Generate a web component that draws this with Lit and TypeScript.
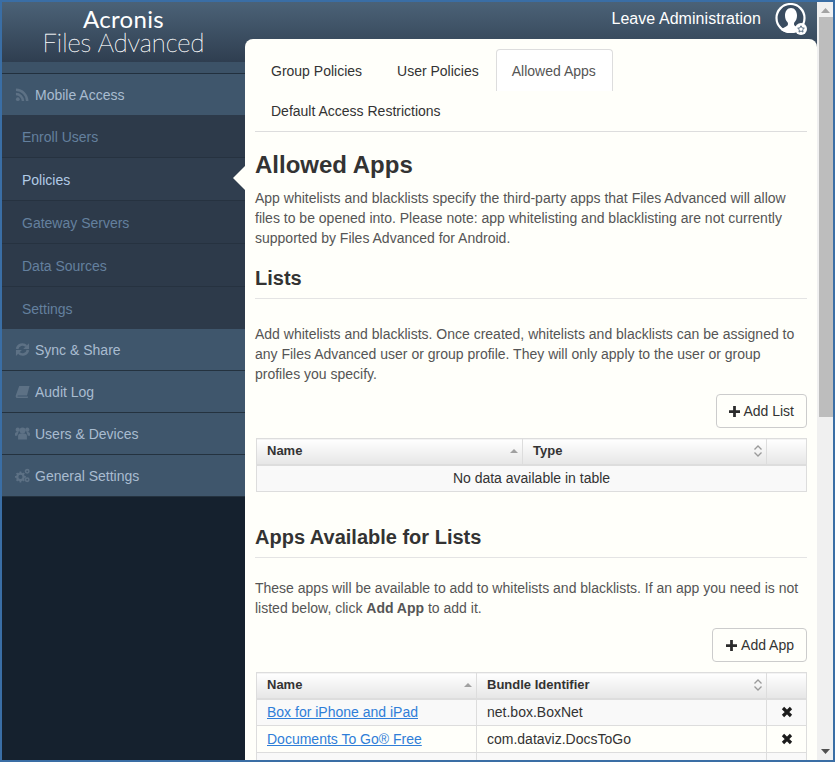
import { LitElement, css, html, svg } from "lit";
import { customElement } from "lit/decorators.js";

const icons: Record<string, unknown> = {
  rss: svg`<circle cx="3" cy="13" r="2"/><path d="M1 7.500a7.500 7.500 0 0 1 7.500 7.500M1 3a12 12 0 0 1 12 12" fill="none" stroke="currentColor" stroke-width="2.600"/>`,
  sync: svg`<path d="M2.200 7.500A5.800 5.800 0 0 1 12 4.400" fill="none" stroke="currentColor" stroke-width="2.800"/><path d="M15 1.200v6.300H8.700z"/><path d="M13.800 8.500A5.800 5.800 0 0 1 4 11.600" fill="none" stroke="currentColor" stroke-width="2.800"/><path d="M1 14.800V8.500h6.300z"/>`,
  book: svg`<path d="M4.500 2h11l-2.700 10.300H3.200c-.7 0-.9.900-.2 1h11l-.4 1.700H2.500C1 15 .4 13.500.8 12.200z"/>`,
  users: svg`<circle cx="8" cy="4.800" r="3.200"/><circle cx="2.900" cy="4" r="2.300"/><circle cx="13.100" cy="4" r="2.300"/><path d="M3.300 14.500V10.500c0-2 1.700-2.800 4.700-2.800s4.700.8 4.700 2.800v4z"/><path d="M0 10.500V8.300c0-1.300 1-1.800 3.800-1.800L2.300 10.500zM16 10.500V8.300c0-1.300-1-1.800-3.800-1.800l1.500 4z"/>`,
  cogs: svg`<circle cx="5.800" cy="9.500" r="3.400" fill="none" stroke="currentColor" stroke-width="2.400"/><path d="M5.800 3.600v2.500M5.800 12.900v2.500M0 9.500h2.500M9.100 9.500h2.500M1.700 5.400l1.700 1.700M8.200 11.900l1.700 1.700M9.900 5.400L8.200 7.100M3.400 11.900l-1.700 1.700" stroke="currentColor" stroke-width="1.900"/><circle cx="13" cy="3.500" r="1.800" fill="none" stroke="currentColor" stroke-width="1.700"/><circle cx="13" cy="12.500" r="1.800" fill="none" stroke="currentColor" stroke-width="1.700"/>`,
};

function navIcon(name: string) {
  return html`<svg class="nav-icon" viewBox="0 0 16 16" fill="currentColor">${icons[name]}</svg>`;
}

const plusIcon = html`<svg class="plus" viewBox="0 0 12 12"><path d="M4.500 0h3v4.500H12v3H7.500V12h-3V7.500H0v-3h4.500z" fill="#2b2b2b"/></svg>`;
const sortAsc = html`<svg class="sort" viewBox="0 0 10 14"><path d="M1 9l4-4 4 4z" fill="#a0a0a0"/></svg>`;
const sortBoth = html`<svg class="sort" viewBox="0 0 10 14"><path d="M1.500 5.500L5 2l3.500 3.500M1.500 8.500L5 12l3.500-3.500" fill="none" stroke="#9a9a9a" stroke-width="1.300"/></svg>`;
const removeIcon = html`<svg class="remove" viewBox="0 0 12 12"><path d="M2 2l8 8M10 2l-8 8" stroke="#1c1c1c" stroke-width="3.200"/></svg>`;

@customElement("app-root")
export class AppRoot extends LitElement {
  static styles = css`
    :host {
      display: block;
      width: 835px;
      height: 762px;
      box-sizing: border-box;
      border: 2px solid #3a6ea5;
      overflow: hidden;
      font-family: "Liberation Sans", Arial, sans-serif;
      font-size: 14px;
      line-height: 20px;
      color: #333;
    }
    .window {
      display: flex;
      height: 100%;
    }
    .app {
      flex: 1;
      min-width: 0;
      display: grid;
      grid-template-columns: 243px 1fr;
      background: linear-gradient(#4b6277, #2f3e50) 0 0 / 100% 60px no-repeat #15212e;
    }
    .logo {
      height: 60px;
      box-sizing: border-box;
      padding-top: 5px;
      display: flex;
      flex-direction: column;
      align-items: center;
      color: #fff;
      font-family: Lato, "Liberation Sans", sans-serif;
    }
    .logo .brand {
      font-size: 24px;
      font-weight: 400;
      line-height: 24px;
      letter-spacing: 0.3px;
    }
    .logo .product {
      font-size: 25.500px;
      font-weight: 100;
      line-height: 22px;
      -webkit-text-stroke: 0.3px #fff;
    }
    .gap {
      height: 11px;
      background: #3c5267;
      border-bottom: 1px solid #22303e;
    }
    .section {
      display: flex;
      align-items: center;
      height: 41px;
      background: #3f566c;
      color: #a9bcd0;
      border-bottom: 1px solid #24323f;
      padding-left: 13px;
    }
    .section.open {
      border-bottom: 0;
    }
    .nav-icon {
      width: 15px;
      height: 15px;
      margin-right: 5px;
      color: #5d7185;
      flex: none;
    }
    .sub {
      background: #2d3a4a;
    }
    .sub a {
      display: flex;
      align-items: center;
      height: 43px;
      box-sizing: border-box;
      padding: 2px 0 0 20px;
      color: #64809e;
      border-bottom: 1px solid #263240;
    }
    .sub a:last-child {
      height: 42px;
      border-bottom: 0;
    }
    .sub a.active {
      color: #b2cbe6;
      background: #303e4f;
    }
    .right {
      display: flex;
      flex-direction: column;
      min-width: 0;
      min-height: 0;
    }
    .top {
      height: 37px;
      box-sizing: border-box;
      flex: none;
      display: flex;
      align-items: center;
      justify-content: flex-end;
      color: #fff;
      font-size: 16px;
      letter-spacing: 0.05px;
      padding: 0 10px 4px 0;
    }
    .avatar {
      width: 32px;
      height: 32px;
      margin-left: 14px;
    }
    .panel {
      flex: 1;
      min-height: 0;
      overflow: hidden;
      background: #fffffa;
      border-radius: 8px 8px 0 0;
      padding: 10px 10px 0;
      color: #555;
    }
    .pointer {
      position: absolute;
      left: -12px;
      top: 127px;
      width: 0;
      height: 0;
      border: 12px solid transparent;
      border-left: 0;
      border-right-color: #fffffa;
    }
    .panel-wrap {
      position: relative;
      flex: 1;
      min-height: 0;
      display: flex;
      flex-direction: column;
    }
    .tabs {
      display: flex;
      flex-wrap: wrap;
      border-bottom: 1px solid #ddd;
      color: #333;
    }
    .tabs a {
      height: 40px;
      box-sizing: border-box;
      padding: 9px 15px 0;
      margin-right: 3px;
      border: 1px solid transparent;
      border-bottom: 0;
      border-radius: 4px 4px 0 0;
    }
    .tabs a:nth-child(-n + 3) {
      height: 42px;
      padding-top: 11px;
    }
    .tabs a:nth-child(2) {
      margin-right: 1px;
    }
    .tabs a.active {
      width: 117px;
      border-color: #ddd;
      background: #fff;
      color: #555;
    }
    h1 {
      margin: 20px 0 10px;
      font-size: 24px;
      line-height: 26px;
      color: #333;
    }
    h2 {
      margin: 19px 0 0;
      padding-bottom: 9px;
      border-bottom: 1px solid #e4e4e4;
      font-size: 20px;
      line-height: 22px;
      color: #333;
    }
    p {
      margin: 0;
    }
    .note {
      margin-top: 25px;
    }
    .actions {
      display: flex;
      justify-content: flex-end;
      margin-top: 10px;
      margin-bottom: 10px;
    }
    button {
      display: flex;
      align-items: center;
      height: 34px;
      padding: 0 12px;
      border: 1px solid #ccc;
      border-radius: 4px;
      background: #fffffa;
      color: #333;
      font: inherit;
    }
    .plus {
      width: 11px;
      height: 11px;
      margin-right: 3px;
    }
    .apps button {
      padding-left: 13px;
    }
    .apps .plus {
      margin-right: 4px;
    }
    table {
      width: 551px;
      margin-left: 1px;
      border-collapse: collapse;
      table-layout: fixed;
      color: #333;
    }
    th, td {
      border: 1px solid #ddd;
      padding: 0 10px;
      text-align: left;
      height: 27px;
      box-sizing: border-box;
    }
    th {
      height: 26px;
      background: linear-gradient(#fff, #e6e6e6);
      border-bottom-width: 2px;
      font-size: 13px;
      font-weight: bold;
    }
    th span {
      display: flex;
      justify-content: space-between;
      align-items: center;
    }
    .sort {
      width: 10px;
      height: 14px;
      margin-right: -7px;
    }
    tbody tr:nth-child(odd) td {
      background: #f9f9f9;
    }
    td.empty {
      text-align: center;
    }
    td a {
      color: #2f7ed8;
      text-decoration: underline;
    }
    td.x {
      text-align: center;
      padding: 0;
    }
    .remove {
      width: 12px;
      height: 12px;
      vertical-align: -1px;
    }
    .apps h2 {
      margin-top: 34px;
    }
    .apps .note {
      margin-top: 20px;
    }
    .scrollbar {
      width: 16px;
      flex: none;
      background: #f0f0f0;
      display: flex;
      flex-direction: column;
      justify-content: space-between;
      position: relative;
    }
    .arrow {
      height: 17px;
      display: flex;
      align-items: center;
      justify-content: center;
    }
    .arrow svg {
      width: 9px;
      height: 5px;
    }
    .thumb {
      position: absolute;
      left: 2px;
      right: 0;
      top: 15px;
      height: 400px;
      background: #bdbdbd;
    }
  `;

  render() {
    return html`
      <div class="window">
        <div class="app">
          <aside>
            <div class="logo">
              <div class="brand">Acronis</div>
              <div class="product">Files Advanced</div>
            </div>
            <div class="gap"></div>
            <div class="section open">${navIcon("rss")}Mobile Access</div>
            <div class="sub">
              <a>Enroll Users</a>
              <a class="active">Policies</a>
              <a>Gateway Servers</a>
              <a>Data Sources</a>
              <a>Settings</a>
            </div>
            <div class="section">${navIcon("sync")}Sync &amp; Share</div>
            <div class="section">${navIcon("book")}Audit Log</div>
            <div class="section">${navIcon("users")}Users &amp; Devices</div>
            <div class="section">${navIcon("cogs")}General Settings</div>
          </aside>
          <div class="right">
            <div class="top">
              Leave Administration
              <svg class="avatar" viewBox="0 0 32 32">
                <circle cx="15.500" cy="15" r="14" fill="#3a4c60" stroke="#fff" stroke-width="2.200"/>
                <path d="M6 27c1.500-2.500 5-3 6.500-4.500.6-1 .6-2.200.2-3-1.800-1.800-2.700-4-2.700-7C10 8.500 12.300 5 16 5s6 3.500 6 7.500c0 3-.9 5.200-2.700 7-.4.800-.4 2 .2 3 1.500 1.500 5 2 6.500 4.500-2.500 2-6 3-10 3s-7.500-1-10-3z" fill="#fff"/>
                <circle cx="26" cy="26" r="6" fill="#fff"/>
                <path d="M26 22.800l1 2.100 2.300.3-1.700 1.600.4 2.300-2-1.100-2 1.100.4-2.300-1.700-1.600 2.300-.3z" fill="none" stroke="#4a6178" stroke-width=".9"/>
              </svg>
            </div>
            <div class="panel-wrap">
              <div class="pointer"></div>
              <div class="panel">
                <div class="tabs">
                  <a>Group Policies</a>
                  <a>User Policies</a>
                  <a class="active">Allowed Apps</a>
                  <a>Default Access Restrictions</a>
                </div>
                <h1>Allowed Apps</h1>
                <p>App whitelists and blacklists specify the third-party apps that Files Advanced will allow files to be opened into. Please note: app whitelisting and blacklisting are not currently supported by Files Advanced for Android.</p>
                <h2>Lists</h2>
                <p class="note">Add whitelists and blacklists. Once created, whitelists and blacklists can be assigned to any Files Advanced user or group profile. They will only apply to the user or group profiles you specify.</p>
                <div class="actions"><button>${plusIcon}Add List</button></div>
                <table>
                  <colgroup><col style="width:266px" /><col style="width:244px" /><col /></colgroup>
                  <thead>
                    <tr><th><span>Name ${sortAsc}</span></th><th><span>Type ${sortBoth}</span></th><th></th></tr>
                  </thead>
                  <tbody>
                    <tr><td class="empty" colspan="3">No data available in table</td></tr>
                  </tbody>
                </table>
                <div class="apps">
                  <h2>Apps Available for Lists</h2>
                  <p class="note">These apps will be available to add to whitelists and blacklists. If an app you need is not listed below, click <b>Add App</b> to add it.</p>
                  <div class="actions"><button>${plusIcon}Add App</button></div>
                  <table>
                    <colgroup><col style="width:220px" /><col style="width:290px" /><col /></colgroup>
                    <thead>
                      <tr><th><span>Name ${sortAsc}</span></th><th><span>Bundle Identifier ${sortBoth}</span></th><th></th></tr>
                    </thead>
                    <tbody>
                      <tr><td><a>Box for iPhone and iPad</a></td><td>net.box.BoxNet</td><td class="x">${removeIcon}</td></tr>
                      <tr><td><a>Documents To Go® Free</a></td><td>com.dataviz.DocsToGo</td><td class="x">${removeIcon}</td></tr>
                      <tr><td></td><td></td><td class="x"></td></tr>
                    </tbody>
                  </table>
                </div>
              </div>
            </div>
          </div>
        </div>
        <div class="scrollbar">
          <div class="arrow"><svg viewBox="0 0 9 5"><path d="M4.500 0L9 5H0z" fill="#a3a3a3"/></svg></div>
          <div class="thumb"></div>
          <div class="arrow"><svg viewBox="0 0 9 5"><path d="M4.500 5L9 0H0z" fill="#505050"/></svg></div>
        </div>
      </div>
    `;
  }
}
